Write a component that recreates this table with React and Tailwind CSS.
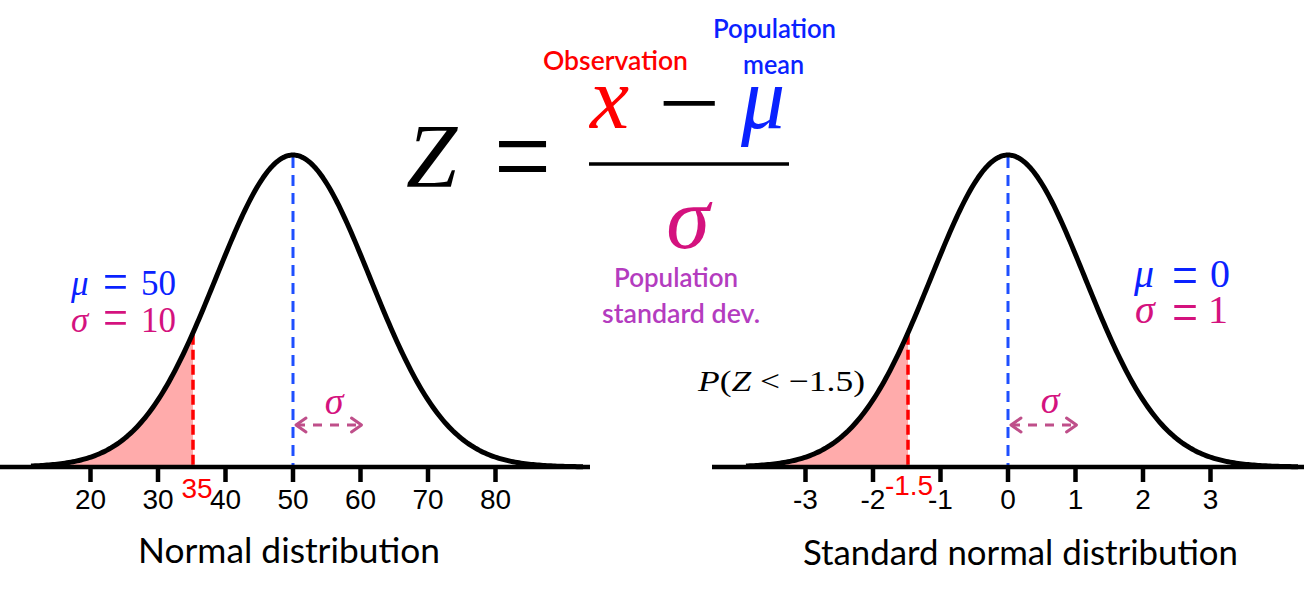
import React from "react";

const AXIS_Y = 467;
const PEAK = 312;
const SPREAD = 77;
const UNIT = 67.5;

const BLUE = "#0a22ff";
const DASH_BLUE = "#1e4fff";
const RED = "#ff0000";
const MAGENTA = "#d4127e";
const PURPLE = "#b43cbf";
const ARROW = "#bf4f8a";
const FILL = "#ffabab";

const serif = "'Liberation Serif', 'Times New Roman', serif";
const helv = "'Liberation Sans', Arial, sans-serif";
const gill = "Lato, 'Open Sans', sans-serif";

function yAt(cx, x) {
  const d = x - cx;
  return AXIS_Y - PEAK * Math.exp(-(d * d) / (2 * SPREAD * SPREAD));
}

function curvePath(cx, from, to) {
  let d = "";
  for (let x = from; x <= to; x += 2) {
    d += (x === from ? "M" : "L") + x + " " + yAt(cx, x).toFixed(2) + " ";
  }
  return d;
}

function areaPath(cx, from, cut) {
  let d = `M${from} ${AXIS_Y} `;
  for (let x = from; x <= cut; x += 2) {
    d += `L${x} ${yAt(cx, x).toFixed(2)} `;
  }
  d += `L${cut} ${yAt(cx, cut).toFixed(2)} L${cut} ${AXIS_Y} Z`;
  return d;
}

function SigmaArrow({ x, y }) {
  const x2 = x + UNIT;
  return (
    <g stroke={ARROW} strokeWidth="3" fill="none" strokeLinecap="round">
      <line x1={x + 1} y1={y} x2={x2 - 1} y2={y} strokeDasharray="9 8" strokeLinecap="butt" />
      <polyline points={`${x + 11},${y - 7} ${x + 1},${y} ${x + 11},${y + 7}`} strokeLinejoin="round" />
      <polyline points={`${x2 - 11},${y - 7} ${x2 - 1},${y} ${x2 - 11},${y + 7}`} strokeLinejoin="round" />
    </g>
  );
}

// thin TeX-like equals sign: big font size, squeezed to the wanted width
function Eq({ x, y, size, width, fill }) {
  return (
    <text x={x} y={y} fontFamily={serif} fontSize={size} fill={fill} textLength={width} lengthAdjust="spacingAndGlyphs">
      =
    </text>
  );
}

function Chart({ cx, axisFrom, axisTo, ticks, cut }) {
  return (
    <g>
      <path d={areaPath(cx, cx - 262, cut)} fill={FILL} />
      <line x1={cut} y1={yAt(cx, cut) + 2} x2={cut} y2={AXIS_Y} stroke={RED} strokeWidth="3.5" strokeDasharray="10 5" />
      <line x1={cx} y1={157} x2={cx} y2={AXIS_Y - 2} stroke={DASH_BLUE} strokeWidth="3" strokeDasharray="11 7" />
      <path d={curvePath(cx, cx - 262, cx + 290)} fill="none" stroke="#000" strokeWidth="5" strokeLinejoin="round" />
      <line x1={axisFrom} y1={AXIS_Y} x2={axisTo} y2={AXIS_Y} stroke="#000" strokeWidth="4.5" />
      {ticks.map((t) => (
        <line key={t.label} x1={cx + t.v * UNIT} y1={AXIS_Y} x2={cx + t.v * UNIT} y2={482} stroke="#000" strokeWidth="4.5" />
      ))}
      {ticks.map((t) => (
        <text key={"l" + t.label} x={cx + t.v * UNIT} y={509} textAnchor="middle" fontFamily={helv} fontSize="28" fill="#000">
          {t.label}
        </text>
      ))}
      <SigmaArrow x={cx + 2} y={425} />
    </g>
  );
}

export default function App() {
  const left = 293;
  const right = 1008;
  const leftTicks = [20, 30, 40, 50, 60, 70, 80].map((n) => ({ v: (n - 50) / 10, label: String(n) }));
  const rightTicks = [-3, -2, -1, 0, 1, 2, 3].map((n) => ({ v: n, label: String(n) }));

  return (
    <div className="w-[1304px] h-[597px] bg-white overflow-hidden">
      <svg width="1304" height="597" viewBox="0 0 1304 597" className="block">
        <Chart cx={left} axisFrom={0} axisTo={590} ticks={leftTicks} cut={193} />
        <Chart cx={right} axisFrom={712} axisTo={1304} ticks={rightTicks} cut={908} />

        {/* cut labels */}
        <text x={197} y={498} textAnchor="middle" fontFamily={helv} fontSize="28" fill={RED}>35</text>
        <text x={909} y={495} textAnchor="middle" fontFamily={helv} fontSize="28" fill={RED}>-1.5</text>

        {/* sigma over arrows */}
        <text x={334} y={414} textAnchor="middle" fontFamily={serif} fontStyle="italic" fontSize="38" fill={MAGENTA}>σ</text>
        <text x={1050} y={413} textAnchor="middle" fontFamily={serif} fontStyle="italic" fontSize="38" fill={MAGENTA}>σ</text>

        {/* left params */}
        <g fontFamily={serif} fontSize="35">
          <text x={71} y={295} fontStyle="italic" fill={BLUE}>μ</text>
          <Eq x={103} y={300} size={54} width={25} fill={BLUE} />
          <text x={141} y={295} fill={BLUE}>50</text>
          <text x={71} y={332} fontStyle="italic" fill={MAGENTA}>σ</text>
          <Eq x={103} y={336} size={54} width={25} fill={MAGENTA} />
          <text x={141} y={332} fill={MAGENTA}>10</text>
        </g>

        {/* right params */}
        <g fontFamily={serif} fontSize="40">
          <text x={1134} y={287} fontStyle="italic" fill={BLUE}>μ</text>
          <Eq x={1172} y={295} size={60} width={26} fill={BLUE} />
          <text x={1210} y={287} fill={BLUE}>0</text>
          <text x={1135} y={323} fontStyle="italic" fill={MAGENTA}>σ</text>
          <Eq x={1172} y={332} size={60} width={26} fill={MAGENTA} />
          <text x={1208} y={323} fill={MAGENTA}>1</text>
        </g>

        <text x={698} y={391} fontFamily={serif} fontSize="30" fill="#000" textLength="167" lengthAdjust="spacingAndGlyphs">
          <tspan fontStyle="italic">P</tspan>(<tspan fontStyle="italic">Z</tspan> &lt; −1.5)
        </text>

        {/* formula */}
        <text x={406} y={187} fontFamily={serif} fontStyle="italic" fontSize="92" fill="#000">Z</text>
        <Eq x={494} y={197} size={122} width={57} fill="#000" />
        <text x={590} y={128} fontFamily={serif} fontStyle="italic" fontSize="88" fill={RED}>x</text>
        <text x={658} y={135} fontFamily={serif} fontSize="96" fill="#000" textLength="62" lengthAdjust="spacingAndGlyphs">−</text>
        <text x={741} y={128} fontFamily={serif} fontStyle="italic" fontSize="88" fill={BLUE}>μ</text>
        <line x1={589} y1={164} x2={789} y2={164} stroke="#000" strokeWidth="3.5" />
        <text x={688} y={248} textAnchor="middle" fontFamily={serif} fontStyle="italic" fontSize="88" fill={MAGENTA}>σ</text>

        {/* formula labels */}
        <g fontFamily={gill} fontSize="27" fontWeight="600">
          <text x={543} y={70} fill={RED} textLength="145" lengthAdjust="spacingAndGlyphs">Observation</text>
          <text x={713} y={38} fill={BLUE} textLength="123" lengthAdjust="spacingAndGlyphs">Population</text>
          <text x={743} y={74} fill={BLUE} textLength="61" lengthAdjust="spacingAndGlyphs">mean</text>
          <text x={614} y={287} fill={PURPLE} textLength="124" lengthAdjust="spacingAndGlyphs">Population</text>
          <text x={602} y={323} fill={PURPLE} textLength="158" lengthAdjust="spacingAndGlyphs">standard dev.</text>
        </g>

        {/* titles */}
        <g fontFamily={gill} fontSize="34" fill="#000">
          <text x={138} y={563} textLength="302" lengthAdjust="spacingAndGlyphs">Normal distribution</text>
          <text x={803} y={565} textLength="435" lengthAdjust="spacingAndGlyphs">Standard normal distribution</text>
        </g>
      </svg>
    </div>
  );
}
